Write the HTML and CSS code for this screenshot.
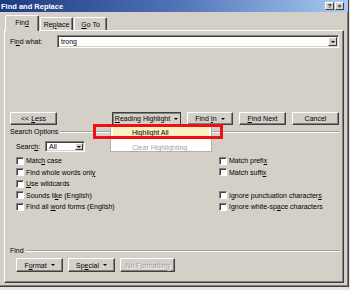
FILE: index.html
```html
<!DOCTYPE html>
<html>
<head>
<meta charset="utf-8">
<title>Find and Replace</title>
<link rel="stylesheet" href="styles.css">
</head>
<body>
<div class="window">
  <div class="titlebar">
    <span class="title">Find and Replace</span>
    <div class="tbtns"><span class="tbtn">?</span><span class="tbtn">×</span></div>
  </div>
  <div class="tabs">
    <div class="tab active"><span>Fin<u>d</u></span></div>
    <div class="tab"><span>Re<u>p</u>lace</span></div>
    <div class="tab"><span><u>G</u>o To</span></div>
  </div>
  <div class="panel">
    <div class="findrow">
      <span class="lbl">Fi<u>n</u>d what:</span>
      <div class="combo"><span class="ctext">trong</span><span class="dbtn"><i class="arrow"></i></span></div>
    </div>

    <div class="btnrow">
      <button class="btn w47"><span>&lt;&lt; <u>L</u>ess</span></button>
      <div class="rh-wrap">
        <button class="btn pressed rh"><span><u>R</u>eading Highlight</span><i class="arrow"></i></button>
        <div class="menu">
          <div class="mi hl"><span><u>H</u>ighlight All</span></div>
          <div class="mi dis"><span><u>C</u>lear Highlighting</span></div>
        </div>
        <div class="redbox"></div>
      </div>
      <button class="btn w46"><span>Find <u>I</u>n</span><i class="arrow"></i></button>
      <button class="btn w47"><span><u>F</u>ind Next</span></button>
      <button class="btn w47"><span>Cancel</span></button>
    </div>

    <div class="group">
      <span>Search Options</span><span class="etch"></span>
    </div>

    <div class="searchrow">
      <span class="slbl">Searc<u>h</u>:</span>
      <div class="select"><span class="ctext">All</span><span class="dbtn"><i class="arrow"></i></span></div>
    </div>

    <div class="checks">
      <div class="ck"><span class="box"></span><span>Matc<u>h</u> case</span></div>
      <div class="ck"><span class="box"></span><span>Match prefi<u>x</u></span></div>
      <div class="ck"><span class="box"></span><span>Find whole words onl<u>y</u></span></div>
      <div class="ck"><span class="box"></span><span>Match suffi<u>x</u></span></div>
      <div class="ck"><span class="box"></span><span><u>U</u>se wildcards</span></div>
      <div class="empty"></div>
      <div class="ck"><span class="box"></span><span>Sounds li<u>k</u>e (English)</span></div>
      <div class="ck"><span class="box"></span><span>Ignore punctuation character<u>s</u></span></div>
      <div class="ck"><span class="box"></span><span>Find all <u>w</u>ord forms (English)</span></div>
      <div class="ck"><span class="box"></span><span>Ignore white-sp<u>a</u>ce characters</span></div>
    </div>

    <div class="group findgroup">
      <span>Find</span><span class="etch"></span>
    </div>

    <div class="bottomrow">
      <button class="btn w47"><span>F<u>o</u>rmat</span><i class="arrow"></i></button>
      <button class="btn w47"><span>Sp<u>e</u>cial</span><i class="arrow"></i></button>
      <button class="btn w55 disabled"><span>No Formatting</span></button>
    </div>
  </div>
</div>
</body>
</html>
```

FILE: styles.css
```css
* { box-sizing: border-box; }
html, body { margin: 0; padding: 0; }
body {
  width: 350px;
  height: 290px;
  overflow: hidden;
  background: #e6e4de;
  font-family: "Liberation Sans", Arial, sans-serif;
  font-size: 7px;
  color: #000;
}
u { text-decoration: underline; text-underline-offset: 1px; }

.window {
  width: 349px;
  height: 287px;
  background: #d4d0c8;
  border-right: 1px solid #404040;
  border-bottom: 1px solid #404040;
  box-shadow: inset -1px -1px 0 #808080;
  display: flex;
  flex-direction: column;
}

.titlebar {
  flex: none;
  height: 12px;
  background: linear-gradient(to right, #1c3a82, #4f72b6 50%, #a8caf0);
  display: flex;
  align-items: center;
  justify-content: space-between;
  padding: 0 4px 0 1px;
}
.title { color: #fff; font-weight: bold; font-size: 7.5px; }
.tbtns { display: flex; gap: 1px; }
.tbtn {
  width: 9px;
  height: 8px;
  background: #d4d0c8;
  border: 1px solid;
  border-color: #fff #404040 #404040 #fff;
  font-size: 6px;
  font-weight: bold;
  line-height: 1;
  display: flex;
  align-items: center;
  justify-content: center;
}

.tabs {
  flex: none;
  height: 16px;
  margin-top: 2px;
  padding-left: 5px;
  display: flex;
  align-items: flex-end;
  gap: 1px;
  position: relative;
  z-index: 1;
}
.tab {
  width: 33px;
  height: 13px;
  border: 1px solid;
  border-bottom: none;
  border-color: #fff #404040 transparent #fff;
  border-radius: 2px 2px 0 0;
  box-shadow: inset -1px 0 0 #808080;
  display: flex;
  align-items: center;
  justify-content: center;
}
.tab.active {
  width: 34px;
  height: 16px;
  margin-bottom: -1px;
  background: #d4d0c8;
  padding-bottom: 2px;
}

.panel {
  flex: none;
  margin-left: 4px;
  width: 340px;
  height: 253px;
  border: 1px solid;
  border-color: #fff #404040 #404040 #fff;
  box-shadow: inset -1px -1px 0 #808080;
  padding: 4px 4px 0 5px;
  display: flex;
  flex-direction: column;
}

.findrow { display: flex; align-items: center; height: 13px; }
.lbl { width: 47px; flex: none; }
.combo, .select {
  height: 13px;
  background: #fff;
  border: 1px solid;
  border-color: #808080 #fff #fff #808080;
  box-shadow: inset 1px 1px 0 #404040, inset -1px -1px 0 #d4d0c8;
  padding: 1px;
  display: flex;
  align-items: center;
}
.combo { flex: 1; }
.ctext { flex: 1; padding-left: 2px; }
.dbtn {
  width: 9px;
  height: 9px;
  background: #d4d0c8;
  border: 1px solid;
  border-color: #fff #404040 #404040 #fff;
  display: flex;
  align-items: center;
  justify-content: center;
}
.arrow {
  display: inline-block;
  width: 0;
  height: 0;
  border-left: 2px solid transparent;
  border-right: 2px solid transparent;
  border-top: 2px solid #000;
}

.btnrow { display: flex; gap: 6px; margin-top: 64px; height: 13px; }
.btn {
  height: 13px;
  padding: 0;
  margin: 0;
  font: inherit;
  color: #000;
  background: #d4d0c8;
  border: 1px solid;
  border-color: #fff #404040 #404040 #fff;
  box-shadow: inset -1px -1px 0 #808080;
  display: flex;
  align-items: center;
  justify-content: center;
  gap: 4px;
  white-space: nowrap;
}
.w46 { width: 46px; }
.w47 { width: 47px; }
.w55 { width: 55px; }
.rh-wrap { margin-left: auto; position: relative; z-index: 2; }
.btn.rh { width: 69px; }
.btn.pressed {
  border-color: #404040;
  box-shadow: inset 1px 1px 0 #808080;
}
.btn.disabled { color: #a0a0a0; text-shadow: 1px 1px 0 #fff; }

.menu {
  position: absolute;
  left: -2px;
  top: 12px;
  width: 102px;
  height: 28px;
  background: #fff;
  border: 1px solid #b0b0b0;
  padding: 2px 2px 0;
}
.mi { height: 10px; display: flex; align-items: center; padding-left: 19px; }
.mi.hl { background: #fdefc2; }
.mi.dis { color: #a4a4a4; margin-top: 5px; }
.redbox {
  position: absolute;
  left: -19px;
  top: 12px;
  width: 130px;
  height: 15px;
  border: 3px solid #ee1111;
}

.group { display: flex; align-items: center; height: 9px; margin-top: 2px; }
.etch {
  flex: 1;
  margin-left: 2px;
  height: 2px;
  border-top: 1px solid #a0a0a0;
  border-bottom: 1px solid #fff;
}
.findgroup { margin-top: 33.5px; }

.searchrow { display: flex; align-items: center; height: 11px; margin-top: 5px; padding-left: 6px; }
.slbl { width: 29px; flex: none; }
.select { width: 40px; height: 11px; }
.select .dbtn { width: 8px; height: 7px; }

.checks {
  margin-top: 3px;
  padding-left: 6px;
  display: grid;
  grid-template-columns: 203px 1fr;
  grid-auto-rows: 11.5px;
}
.ck { display: flex; align-items: center; gap: 2px; }
.box {
  width: 8px;
  height: 8px;
  flex: none;
  background: #fff;
  border: 1px solid;
  border-color: #808080 #fff #fff #808080;
  box-shadow: inset 1px 1px 0 #404040;
}

.bottomrow { display: flex; gap: 5px; margin-top: 3px; padding-left: 6px; }
.bottomrow .btn { height: 14px; }
```
